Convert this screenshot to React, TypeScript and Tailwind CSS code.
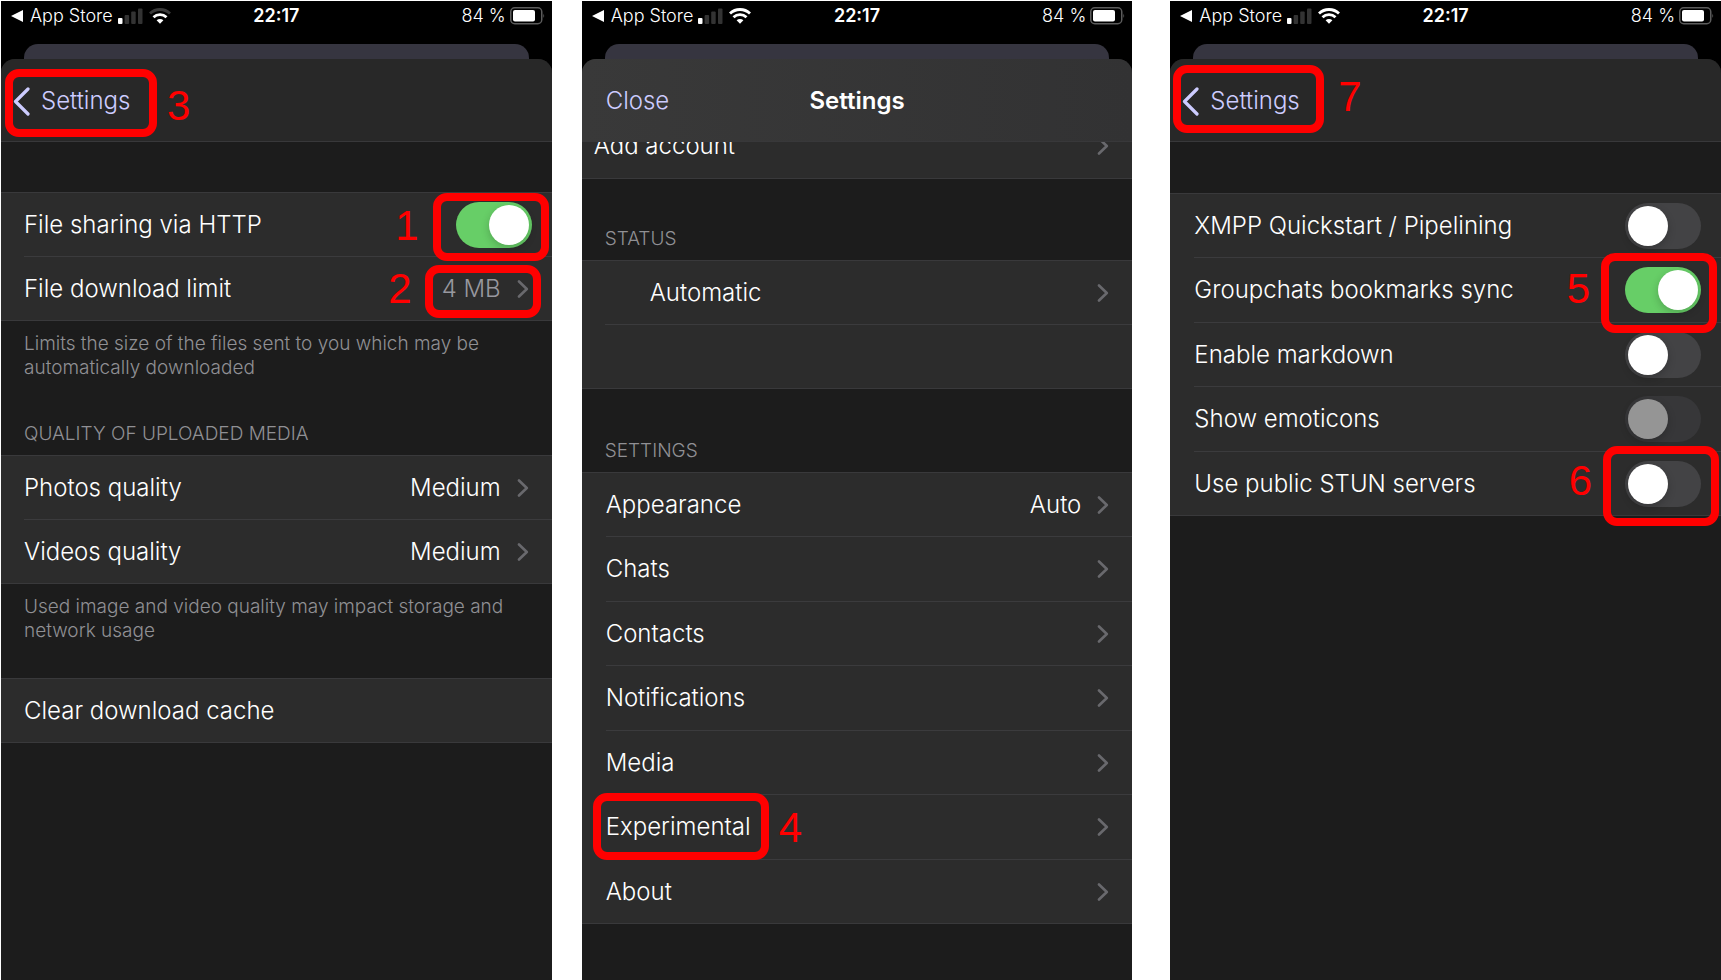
import type { ReactNode } from "react";

function StatusBar({ weakWifi = false }: { weakWifi?: boolean }) {
  const outer = weakWifi ? "#3a3a3a" : "#ffffff";
  return (
    <div className="grid h-[43px] grid-cols-[1fr_auto_1fr] items-start pt-[5px] text-lg leading-5 text-white">
      <div className="flex items-center pl-2.5">
        <button className="flex items-center gap-[7px]">
          <svg width="12" height="12" viewBox="0 0 12 12" aria-hidden="true">
            <path d="M0 6 12 0V12Z" fill="#fff" />
          </svg>
          App Store
        </button>
        <svg className="ml-[5px]" width="25" height="17" viewBox="0 0 25 17" aria-label="Mobile signal">
          <rect x="0" y="10" width="4.500" height="6" rx="1" fill="#fff" />
          <rect x="6.600" y="7" width="4.500" height="9" rx="1" fill="#333" />
          <rect x="13.200" y="3.500" width="4.500" height="12.500" rx="1" fill="#333" />
          <rect x="20" y="0.500" width="4.500" height="15.500" rx="1" fill="#333" />
        </svg>
        <svg className="ml-1.5" width="22" height="16" viewBox="0 0 22 16" fill="none" aria-label="Wi-Fi">
          <path d="M1 5.600A14.300 14.300 0 0 1 21 5.600" stroke={outer} strokeWidth="2.800" />
          <path d="M4.500 9.200A9.300 9.300 0 0 1 17.500 9.200" stroke="#fff" strokeWidth="2.800" />
          <path d="M11 15.800 7.600 12.300A4.900 4.900 0 0 1 14.400 12.300Z" fill="#fff" />
        </svg>
      </div>
      <span className="font-semibold">22:17</span>
      <div className="flex items-center justify-end gap-1 pr-[7px]">
        84 %
        <svg width="35" height="18" viewBox="0 0 35 18" aria-label="Battery">
          <rect x="0.750" y="0.750" width="31" height="16" rx="4" fill="none" stroke="#5c5c5c" strokeWidth="1.500" />
          <rect x="3" y="3" width="22" height="11.500" rx="2" fill="#fff" />
          <path d="M33.300 6.500Q35 8.700 33.300 11Z" fill="#5c5c5c" />
        </svg>
      </div>
    </div>
  );
}

function Screen({ header, children, marks, headerClass, weakWifi }: {
  header: ReactNode;
  children: ReactNode;
  marks: ReactNode;
  headerClass: string;
  weakWifi?: boolean;
}) {
  return (
    <section className="relative flex min-w-0 flex-1 flex-col overflow-hidden bg-black">
      <StatusBar weakWifi={weakWifi} />
      <div className="mx-[23px] h-[15px] rounded-t-[14px] bg-[#363540]" />
      <div className="flex flex-1 flex-col overflow-hidden rounded-t-[14px] bg-[#1c1c1c]">
        <header className={`relative z-10 grid h-[83px] shrink-0 grid-cols-[1fr_auto_1fr] items-center border-b border-[#38383a] pt-0.5 text-2xl ${headerClass}`}>
          {header}
        </header>
        {children}
      </div>
      {marks}
    </section>
  );
}

function BackButton() {
  return (
    <button className="flex items-center gap-[11px] justify-self-start pl-3 text-[#cdccff]">
      <svg width="17" height="29" viewBox="0 0 17 29" fill="none" aria-hidden="true">
        <path d="M15 2 2.500 14.500 15 27" stroke="currentColor" strokeWidth="3.200" strokeLinecap="round" strokeLinejoin="round" />
      </svg>
      Settings
    </button>
  );
}

function Chevron() {
  return (
    <svg className="shrink-0" width="12" height="18" viewBox="0 0 12 18" fill="none" aria-hidden="true">
      <path d="M2 1.500 9.800 9 2 16.500" stroke="#69696d" strokeWidth="2.600" strokeLinecap="round" strokeLinejoin="round" />
    </svg>
  );
}

function Group({ children }: { children: ReactNode }) {
  return <div className="shrink-0 border-y border-[#39393b] bg-[#2c2c2c]">{children}</div>;
}

/* The divider starts at the text inset; the last row leaves it to the group's border. */
const ROW = "ml-[23px] flex h-16 items-center justify-between border-b border-[#3b3b3d] text-left text-2xl text-white last:h-[63px] last:border-b-0";
const TALL_ROW = "ml-6 flex h-16 even:h-[65px] items-center justify-between border-b border-[#3b3b3d] text-left text-2xl text-white last:h-[63px] last:border-b-0";

function LinkRow({ label, value, dim = false, tall = false, inset = "" }: {
  label: string;
  value?: string;
  dim?: boolean;
  tall?: boolean;
  inset?: string;
}) {
  return (
    <div className={tall ? TALL_ROW : ROW}>
      <button className={`flex h-full w-full items-center justify-between pr-[23px] text-left ${inset}`}>
        {label}
        <span className="flex items-center gap-4">
          {value && <span className={dim ? "text-[#98989f]" : ""}>{value}</span>}
          <Chevron />
        </span>
      </button>
    </div>
  );
}

function SwitchRow({ id, label, on = false, disabled = false, tall = false }: {
  id: string;
  label: string;
  on?: boolean;
  disabled?: boolean;
  tall?: boolean;
}) {
  return (
    <div className={tall ? TALL_ROW : ROW}>
      <label htmlFor={id}>{label}</label>
      <input
        id={id}
        type="checkbox"
        role="switch"
        defaultChecked={on}
        disabled={disabled}
        className="mr-5 flex h-[46px] w-[76px] shrink-0 appearance-none items-center rounded-full bg-[#434345] px-[3px] before:size-10 before:rounded-full before:bg-white before:shadow-[0_3px_8px_rgba(0,0,0,0.2)] checked:justify-end checked:bg-[#67ce67] disabled:bg-[#373739] disabled:before:bg-[#959595]"
      />
    </div>
  );
}

function SectionTitle({ children, className }: { children: ReactNode; className: string }) {
  return <h2 className={`px-[23px] text-[19px] leading-6 text-[#909094] ${className}`}>{children}</h2>;
}

function Footnote({ children }: { children: ReactNode }) {
  return <p className="px-[23px] pt-[11px] text-[19px] leading-6 text-[#909094]">{children}</p>;
}

/* A red callout frame with its step number; both lie over the screen. */
function Mark({ step, box, number }: { step: number; box: string; number: string }) {
  return (
    <>
      <div className={`pointer-events-none absolute z-20 rounded-[14px] border-8 border-[#ff0000] ${box}`} />
      <span className={`absolute z-20 font-['Liberation_Sans',sans-serif] text-[42px] leading-none font-normal text-[#ff0000] ${number}`}>{step}</span>
    </>
  );
}

const DARK_HEADER = "bg-[#282828]";

export default function App() {
  return (
    <main className="flex min-h-screen bg-white pt-px pl-px font-['Inter',sans-serif] font-[350]">
      <Screen
        weakWifi
        headerClass={DARK_HEADER}
        header={<BackButton />}
        marks={
          <>
            <Mark step={3} box="left-1 top-[68px] h-[68px] w-[152px]" number="left-[166px] top-[84px]" />
            <Mark step={1} box="right-[3px] top-48 h-[68px] w-[116px]" number="right-[133px] top-[204px]" />
            <Mark step={2} box="right-[11px] top-[264px] h-[53px] w-[116px]" number="right-[140px] top-[267px]" />
          </>
        }
      >
        <div className="h-[50px] shrink-0" />
        <Group>
          <SwitchRow id="file-sharing" label="File sharing via HTTP" on />
          <LinkRow label="File download limit" value="4 MB" dim />
        </Group>
        <Footnote>Limits the size of the files sent to you which may be automatically downloaded</Footnote>
        <SectionTitle className="pt-[42px] pb-[9px]">QUALITY OF UPLOADED MEDIA</SectionTitle>
        <Group>
          <LinkRow label="Photos quality" value="Medium" />
          <LinkRow label="Videos quality" value="Medium" />
        </Group>
        <Footnote>Used image and video quality may impact storage and network usage</Footnote>
        <div className="h-[35px] shrink-0" />
        <Group>
          <div className={ROW}>
            <button className="h-full w-full text-left">Clear download cache</button>
          </div>
        </Group>
      </Screen>

      <div className="w-[30px] shrink-0" />

      <Screen
        headerClass="bg-linear-to-r from-[#393939] to-[#323233]"
        header={
          <>
            <button className="justify-self-start pl-6 text-[#cdccff]">Close</button>
            <h1 className="font-semibold text-white">Settings</h1>
          </>
        }
        marks={<Mark step={4} box="left-[11px] top-[792px] h-[67px] w-[176px]" number="left-[197px] top-[806px]" />}
      >
        <div className="-mt-7 shrink-0 border-b border-[#39393b] bg-[#2c2c2c]">
          <button className="flex h-16 w-full items-center justify-between pr-[23px] pl-3 text-2xl text-white">
            Add account
            <Chevron />
          </button>
        </div>
        <SectionTitle className="pt-12 pb-[9px]">STATUS</SectionTitle>
        <Group>
          <LinkRow label="Automatic" inset="pl-[45px]" />
          <div className={ROW} />
        </Group>
        <SectionTitle className="pt-[50px] pb-[9px]">SETTINGS</SectionTitle>
        <Group>
          <LinkRow tall label="Appearance" value="Auto" />
          <LinkRow tall label="Chats" />
          <LinkRow tall label="Contacts" />
          <LinkRow tall label="Notifications" />
          <LinkRow tall label="Media" />
          <LinkRow tall label="Experimental" />
          <LinkRow tall label="About" />
        </Group>
      </Screen>

      <div className="w-[38px] shrink-0" />

      <Screen
        headerClass={DARK_HEADER}
        header={<BackButton />}
        marks={
          <>
            <Mark step={7} box="left-[3px] top-16 h-[68px] w-[151px]" number="left-[168px] top-[75px]" />
            <Mark step={5} box="right-1 top-[252px] h-20 w-[116px]" number="right-[131px] top-[267px]" />
            <Mark step={6} box="right-[2px] top-[445px] h-20 w-[116px]" number="right-[129px] top-[459px]" />
          </>
        }
      >
        <div className="h-[51px] shrink-0" />
        <Group>
          <SwitchRow tall id="quickstart" label="XMPP Quickstart / Pipelining" />
          <SwitchRow tall id="bookmarks" label="Groupchats bookmarks sync" on />
          <SwitchRow tall id="markdown" label="Enable markdown" />
          <SwitchRow tall id="emoticons" label="Show emoticons" disabled />
          <SwitchRow tall id="stun" label="Use public STUN servers" />
        </Group>
      </Screen>
    </main>
  );
}
